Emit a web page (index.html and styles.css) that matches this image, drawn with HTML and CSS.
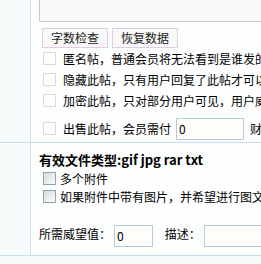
FILE: index.html
```html
<!DOCTYPE html>
<html lang="zh-CN">
<head>
    <meta charset="UTF-8">
    <title>发表帖子</title>
    <link rel="stylesheet" href="styles.css">
</head>
<body>
    <div class="form">
        <!-- 内容区 -->
        <div class="row row-main">
            <div class="side"></div>
            <div class="field">
                <div class="editor"></div>
                <div class="tools">
                    <button class="btn">字数检查</button>
                    <button class="btn">恢复数据</button>
                </div>
                <label class="opt"><span class="box"></span>匿名帖，普通会员将无法看到是谁发的帖子</label>
                <label class="opt"><span class="box"></span>隐藏此帖，只有用户回复了此帖才可以查看</label>
                <label class="opt"><span class="box"></span>加密此帖，只对部分用户可见，用户威望值</label>
                <label class="opt opt-sell"><span class="box"></span>出售此帖，会员需付<span class="input input-price">0</span>财富</label>
            </div>
        </div>

        <!-- 附件区 -->
        <div class="row row-attach">
            <div class="side"></div>
            <div class="field">
                <div class="types">有效文件类型:gif jpg rar txt</div>
                <label class="check"><span class="xpbox"></span>多个附件</label>
                <label class="check"><span class="xpbox"></span>如果附件中带有图片，并希望进行图文混排</label>
                <div class="extra">
                    所需威望值：<span class="input input-rvrc">0</span>
                    <span class="desc">描述：</span><span class="input input-desc"></span>
                </div>
            </div>
        </div>
        <div class="foot"></div>
    </div>
</body>
</html>
```

FILE: styles.css
```css
body {
    margin: 0;
    background: #fdfefe;
    color: #000;
    font-family: 'Noto Sans CJK SC', 'DejaVu Sans', sans-serif;
    font-size: 12px;
    overflow: hidden;
}

.form {
    width: 261px;
}

.row {
    display: flex;
    border-bottom: 1px solid #c9dde8;
}

.side {
    width: 30px;
    flex: none;
    background: #f6fbfb;
    border-right: 1px solid #d3e5ec;
}

.field {
    flex: 1;
    padding-left: 8px;
    overflow: hidden;
    white-space: nowrap;
}

.row-main {
    height: 142px;
}

.editor {
    height: 21px;
    width: 260px;
    background: #f8f8f6;
    border: 1px solid #c9c9c9;
    border-top: none;
    border-right: none;
}

.tools {
    display: flex;
    gap: 4px;
    margin: 6px 0 0 3px;
}

.btn {
    height: 20px;
    padding: 0 8px;
    background: #f9f9f9;
    border: 1px solid #e3cbe6;
    font-family: inherit;
    font-size: 12px;
    line-height: 18px;
    color: #222;
}

.opt {
    display: flex;
    align-items: center;
    height: 21px;
    margin-left: 4px;
}

.box {
    width: 11px;
    height: 11px;
    border: 1px solid #dadada;
    background: #fff;
    margin-right: 7px;
    flex: none;
}

.opt-sell {
    height: 27px;
    margin-top: 4px;
}

.input {
    display: inline-block;
    height: 20px;
    border: 1px solid #b2ccd8;
    background: #fffdfa;
    line-height: 20px;
    padding-left: 2px;
    box-sizing: content-box;
    vertical-align: middle;
}

.input-price {
    width: 64px;
    margin: 0 6px 0 5px;
    flex: none;
}

.row-attach {
    height: 112px;
}

.types {
    font-weight: bold;
    font-size: 13px;
    margin-top: 8px;
    height: 18px;
    line-height: 18px;
}

.check {
    display: flex;
    align-items: center;
    height: 18px;
    margin-left: 4px;
}

.xpbox {
    width: 11px;
    height: 11px;
    border: 1px solid #8fa3b5;
    background: linear-gradient(135deg, #d8dcdc, #fbfbfb);
    margin-right: 4px;
    flex: none;
}

.extra {
    margin-top: 17px;
    height: 24px;
    line-height: 24px;
}

.input-rvrc {
    width: 35px;
    margin-left: 3px;
}

.desc {
    margin-left: 9px;
}

.input-desc {
    width: 80px;
    margin-left: 3px;
}

.foot {
    height: 9px;
    background: #f7fafa;
}
```
